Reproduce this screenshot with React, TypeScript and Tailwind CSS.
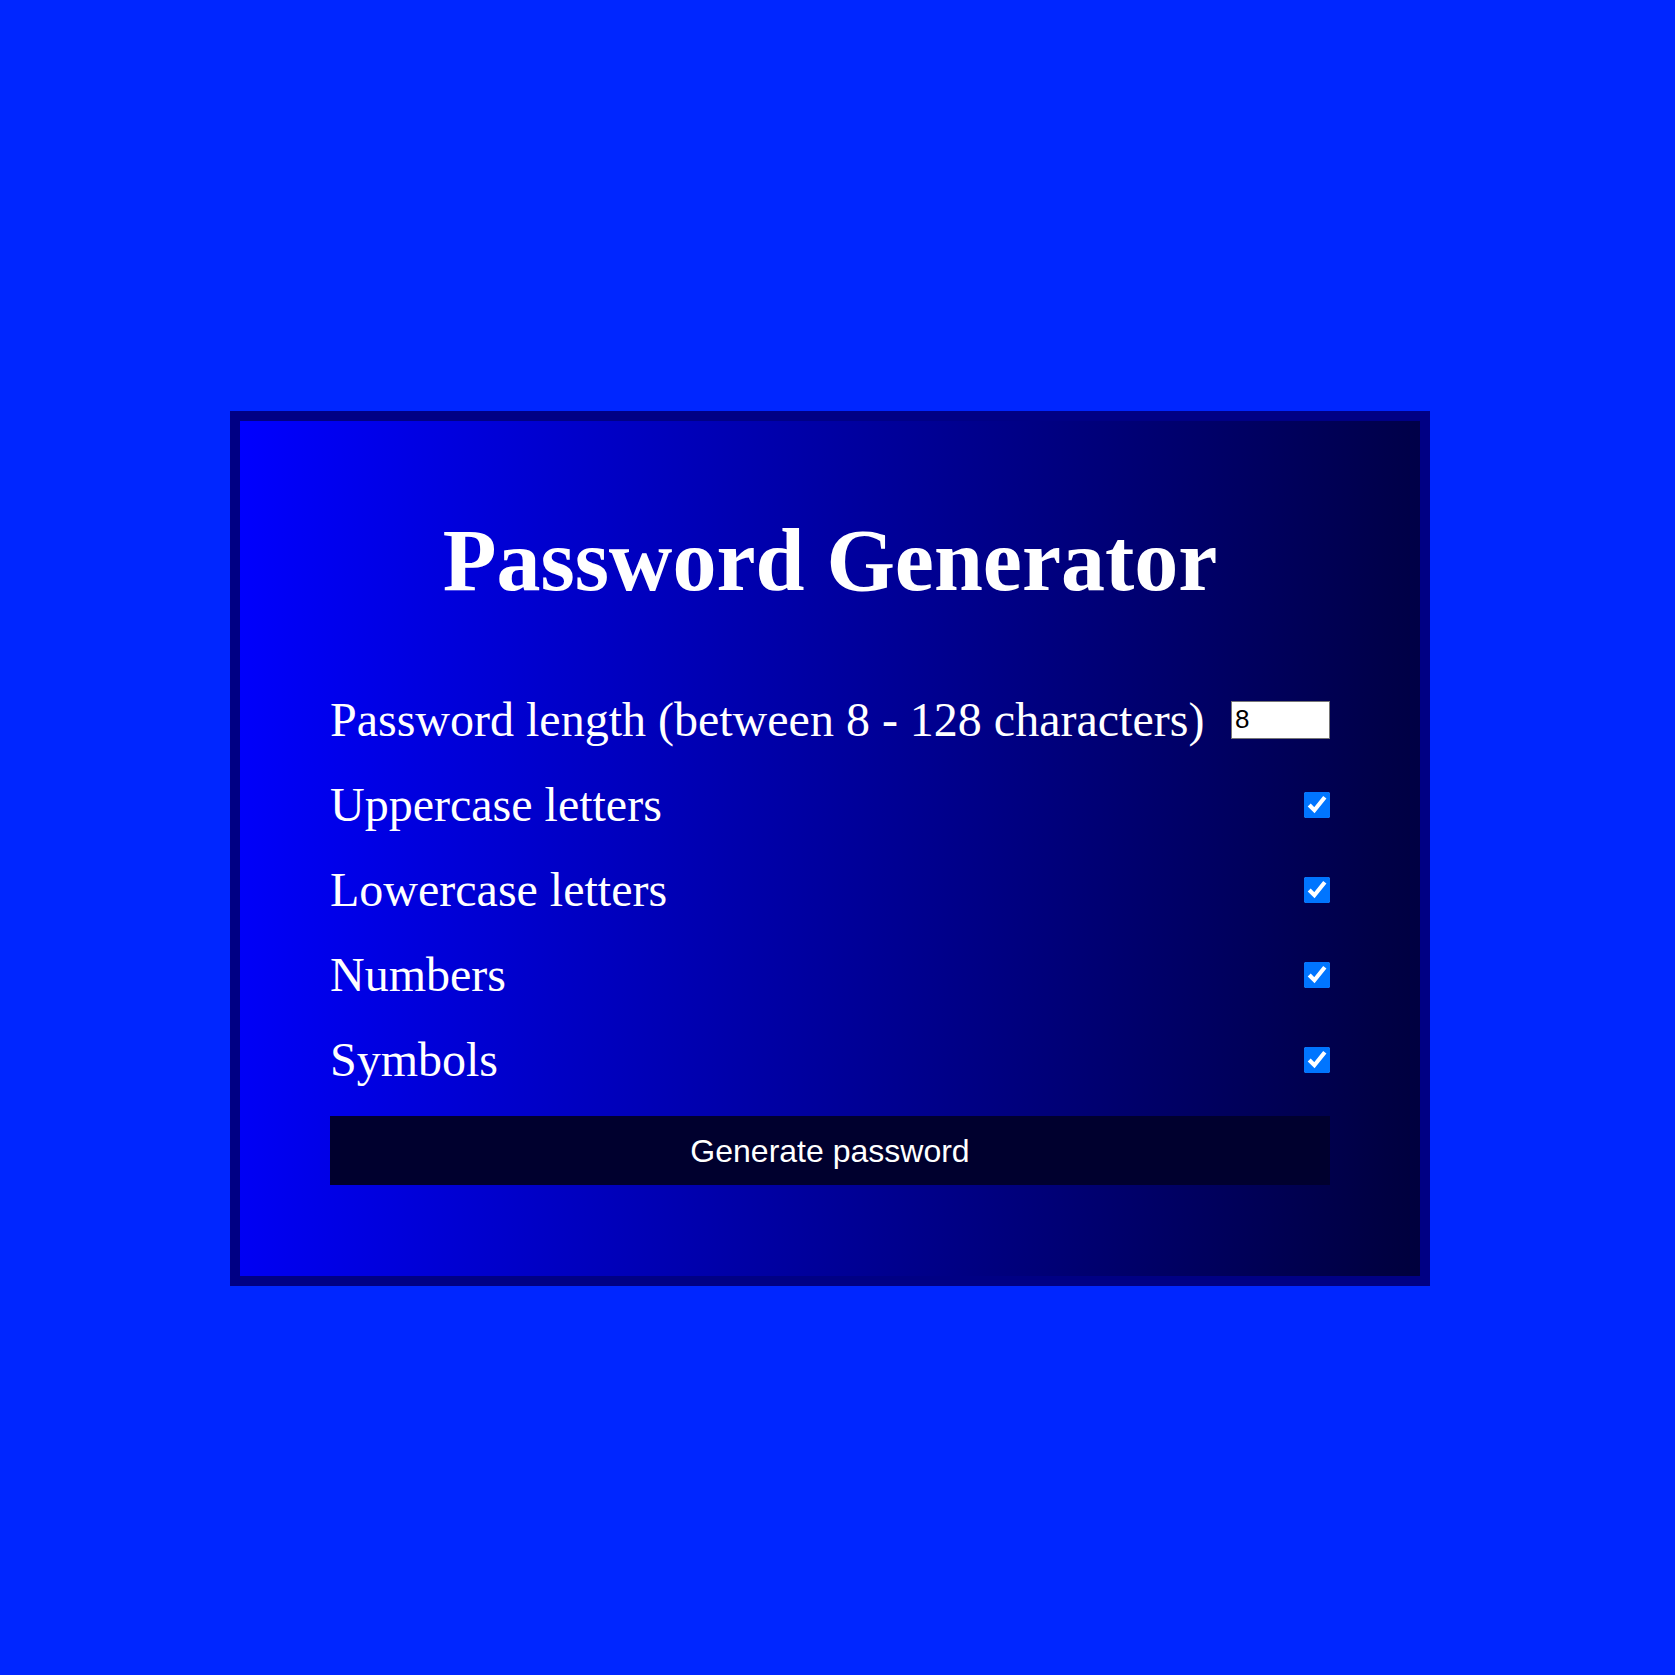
import { useState } from "react";

const options = ["Uppercase letters", "Lowercase letters", "Numbers", "Symbols"];

export default function App() {
  const [length, setLength] = useState("8");
  const [checked, setChecked] = useState<boolean[]>([true, true, true, true]);

  const toggle = (i: number) => {
    setChecked(checked.map((c, j) => (j === i ? !c : c)));
  };

  return (
    <div className="min-h-[1675px] bg-[#0026ff] pt-[411px] font-['Liberation_Serif',serif] text-white">
      <div className="w-[1660px]">
        <div className="mx-auto w-[1200px] border-[10px] border-[#000084] bg-[linear-gradient(95deg,#0000ff,#00003c)] px-[90px] pt-[90px] pb-[91px]">
          <h1 className="text-center text-[88px] font-bold leading-[100px]">Password Generator</h1>

          <div className="mt-[66px] flex flex-col">
            <div className="flex h-[85px] items-center justify-between">
              <label className="text-[48px] leading-[55px]">Password length (between 8 - 128 characters)</label>
              <input
                type="text"
                value={length}
                onChange={(e) => setLength(e.target.value)}
                className="h-[38px] w-[99px] border border-[#767676] bg-white px-[3px] font-['Liberation_Sans',Arial,sans-serif] text-[26px] text-black outline-none"
              />
            </div>
            {options.map((label, i) => (
              <div key={label} className="flex h-[85px] items-center justify-between">
                <label className="text-[48px] leading-[55px]">{label}</label>
                <input
                  type="checkbox"
                  checked={checked[i]}
                  onChange={() => toggle(i)}
                  className="m-0 h-[26px] w-[26px] accent-[#0075ff]"
                />
              </div>
            ))}
          </div>

          <button className="mt-[14px] flex h-[69px] w-full items-center justify-center bg-[#00002e] font-['Liberation_Sans',Arial,sans-serif] text-[32px] text-white">
            Generate password
          </button>
        </div>
      </div>
    </div>
  );
}
